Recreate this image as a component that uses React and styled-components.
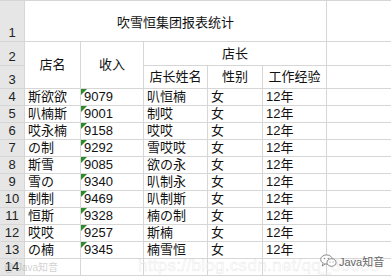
import React from "react";
import styled, { createGlobalStyle } from "styled-components";

const GlobalStyle = createGlobalStyle`
  html, body {
    margin: 0;
    padding: 0;
    background: #ffffff;
    overflow: hidden;
  }
  body {
    font-family: "Liberation Sans", "Noto Sans CJK SC", sans-serif;
  }
`;

const rows = [
  ["斯欲欲", "9079", "叭恒楠", "女", "12年"],
  ["叭楠斯", "9001", "制哎", "女", "12年"],
  ["哎永楠", "9158", "哎哎", "女", "12年"],
  ["の制", "9292", "雪哎哎", "女", "12年"],
  ["斯雪", "9085", "欲の永", "女", "12年"],
  ["雪の", "9340", "叭制永", "女", "12年"],
  ["制制", "9469", "叭制斯", "女", "12年"],
  ["恒斯", "9328", "楠の制", "女", "12年"],
  ["哎哎", "9257", "斯楠", "女", "12年"],
  ["の楠", "9345", "楠雪恒", "女", "12年"],
];

export default function App() {
  return (
    <>
      <GlobalStyle />
      <Page>
        <Sheet>
          <RowHead>1</RowHead>
          <Cell $col="2 / span 5" $center $pad="3px 0 0">
            吹雪恒集团报表统计
          </Cell>
          <Cell />

          <RowHead>2</RowHead>
          <Cell $col="2" $row="span 2" $center>
            店名
          </Cell>
          <Cell $col="3" $row="span 2" $center>
            收入
          </Cell>
          <Cell $col="4 / span 3" $center>
            店长
          </Cell>
          <Cell />

          <RowHead>3</RowHead>
          <Cell $center>店长姓名</Cell>
          <Cell $center>性别</Cell>
          <Cell $center>工作经验</Cell>
          <Cell />

          {rows.map((r, i) => (
            <React.Fragment key={i}>
              <RowHead>{i + 4}</RowHead>
              <Cell>{r[0]}</Cell>
              <Cell $flag>{r[1]}</Cell>
              <Cell>{r[2]}</Cell>
              <Cell>{r[3]}</Cell>
              <Cell>{r[4]}</Cell>
              <Cell />
            </React.Fragment>
          ))}

          <RowHead>14</RowHead>
          <Cell />
          <Cell />
          <Cell />
          <Cell />
          <Cell />
          <Cell />
        </Sheet>

        <UrlMark>https://blog.csdn.net/qq_36633</UrlMark>
        <CornerMark>@ Java知音</CornerMark>
        <WeChatMark>
          <svg width="17" height="14" viewBox="0 0 17 14">
            <ellipse cx="6.5" cy="5.5" rx="5.8" ry="4.6" fill="#fff" stroke="#888" strokeWidth="1" />
            <path d="M3 9.3 L2.2 12 L5.2 10" fill="#fff" stroke="#888" strokeWidth="1" />
            <ellipse cx="11.5" cy="8.5" rx="4.6" ry="3.8" fill="#fff" stroke="#888" strokeWidth="1" />
            <circle cx="4.5" cy="4.5" r="0.8" fill="#888" />
            <circle cx="8.3" cy="4.5" r="0.8" fill="#888" />
            <circle cx="10" cy="8" r="0.6" fill="#888" />
            <circle cx="13" cy="8" r="0.6" fill="#888" />
          </svg>
          <span>Java知音</span>
        </WeChatMark>
      </Page>
    </>
  );
}

const Page = styled.div`
  position: relative;
  width: 391px;
  height: 277px;
  overflow: hidden;
`;

const Sheet = styled.div`
  display: grid;
  grid-template-columns: 24px 55px 62px 63px 54px 63px 64px;
  grid-template-rows: 40px 23px 22px repeat(11, 16px);
  gap: 1px;
  padding: 1px 0;
  background: #d6d6d6;
  font-size: 13px;
  color: #111;
`;

const RowHead = styled.div`
  grid-column: 1;
  background: #e6e6e6;
  display: flex;
  align-items: flex-end;
  justify-content: center;
  line-height: 16px;
  font-size: 13px;
  color: #222;
`;

const Cell = styled.div`
  position: relative;
  background: #ffffff;
  grid-column: ${(p) => p.$col || "auto"};
  grid-row: ${(p) => p.$row || "auto"};
  display: flex;
  align-items: center;
  justify-content: ${(p) => (p.$center ? "center" : "flex-start")};
  padding: ${(p) => p.$pad || (p.$center ? "0" : "0 0 0 3px")};
  line-height: 16px;
  white-space: nowrap;

  ${(p) =>
    p.$flag &&
    `
    &::before {
      content: "";
      position: absolute;
      left: 0;
      top: 0;
      border-top: 6px solid #2b8a2b;
      border-right: 6px solid transparent;
    }
  `}
`;

const UrlMark = styled.div`
  position: absolute;
  left: 138px;
  top: 256px;
  font-size: 17px;
  letter-spacing: 0.3px;
  color: rgba(255, 255, 255, 0.6);
  -webkit-text-stroke: 0.5px rgba(170, 170, 170, 0.3);
  white-space: nowrap;
  pointer-events: none;
`;

const CornerMark = styled.div`
  position: absolute;
  left: 4px;
  top: 259px;
  font-size: 10px;
  color: rgba(150, 150, 150, 0.45);
  white-space: nowrap;
`;

const WeChatMark = styled.div`
  position: absolute;
  left: 320px;
  top: 253px;
  display: flex;
  align-items: center;
  gap: 2px;
  font-size: 11px;
  color: #666;
  text-shadow: 0 0 2px #fff, 0 0 2px #fff;
`;
